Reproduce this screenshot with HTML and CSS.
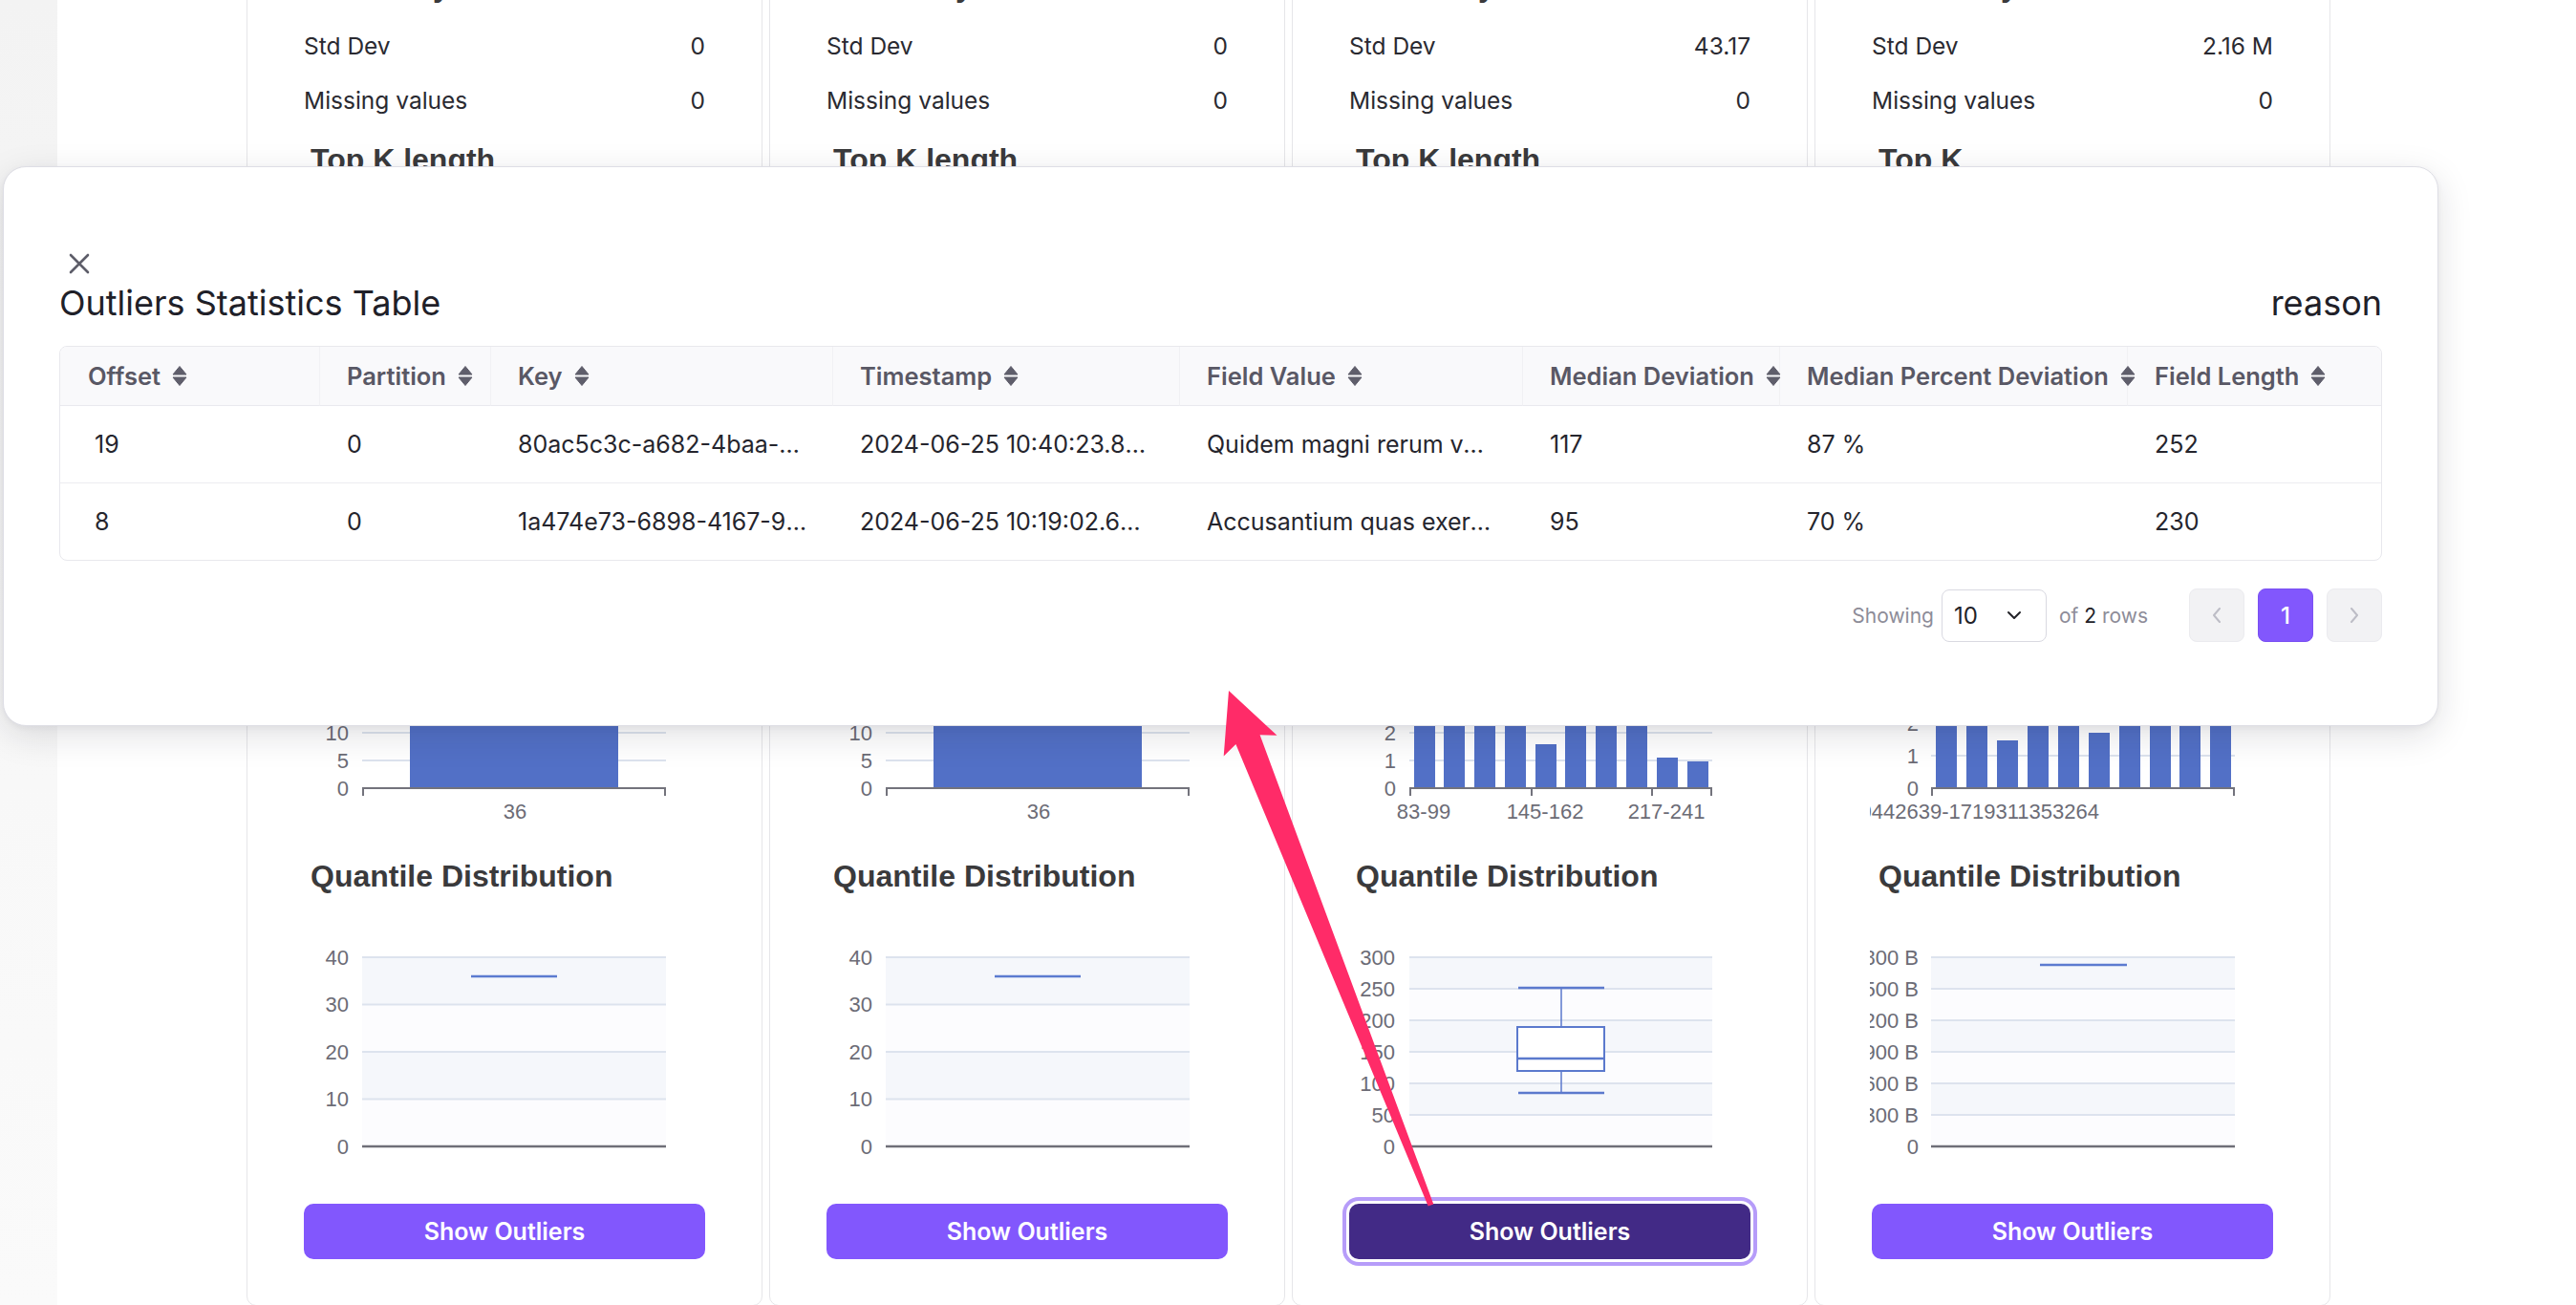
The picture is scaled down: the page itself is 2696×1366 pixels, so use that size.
FILE: index.html
```html
<!DOCTYPE html>
<html lang="en">
<head>
<meta charset="utf-8">
<title>Outliers</title>
<link rel="stylesheet" href="styles.css">
</head>
<body>
<div class="page">
  <aside class="sidebar"></aside>
  <main class="main">
    <div class="cards">
      <!-- Card 1 -->
      <section class="card">
        <h3 class="chart-title">Summary</h3>
        <div class="stats">
          <div class="stat"><span>Std Dev</span><span>0</span></div>
          <div class="stat"><span>Missing values</span><span>0</span></div>
        </div>
        <h3 class="chart-title">Top K length</h3>
        <svg class="chart hist" width="540" height="710" viewBox="0 0 540 710">
          <g class="grid">
            <line x1="121" x2="439" y1="609" y2="609"/><line x1="121" x2="439" y1="580" y2="580"/><line x1="121" x2="439" y1="551" y2="551"/><line x1="121" x2="439" y1="522" y2="522"/><line x1="121" x2="439" y1="493" y2="493"/><line x1="121" x2="439" y1="464" y2="464"/><line x1="121" x2="439" y1="435" y2="435"/><line x1="121" x2="439" y1="406" y2="406"/>
          </g>
          <g class="lbl ylbl">
            <text x="107" y="638">0</text><text x="107" y="609">5</text><text x="107" y="580">10</text><text x="107" y="551">15</text><text x="107" y="522">20</text><text x="107" y="493">25</text><text x="107" y="464">30</text><text x="107" y="435">35</text><text x="107" y="406">40</text>
          </g>
          <rect class="bar" x="171" y="420" width="218" height="218"/>
          <g class="axis"><line x1="121" x2="439" y1="638" y2="638"/><line x1="122" x2="122" y1="638" y2="646"/><line x1="438" x2="438" y1="638" y2="646"/></g>
          <text class="lbl xlbl" x="281" y="662">36</text>
        </svg>
        <h3 class="chart-title">Quantile Distribution</h3>
        <svg class="chart quant" width="540" height="300" viewBox="0 0 540 300">
          <rect class="plot" x="121" y="65" width="318" height="198"/>
          <rect class="band" x="121" y="65" width="318" height="49.5"/>
          <rect class="band" x="121" y="164" width="318" height="49.5"/>
          <g class="grid"><line x1="121" x2="439" y1="65" y2="65"/><line x1="121" x2="439" y1="114.5" y2="114.5"/><line x1="121" x2="439" y1="164" y2="164"/><line x1="121" x2="439" y1="213.5" y2="213.5"/></g>
          <g class="lbl ylbl"><text x="107" y="65">40</text><text x="107" y="114.5">30</text><text x="107" y="164">20</text><text x="107" y="213.5">10</text><text x="107" y="263">0</text></g>
          <line class="baseline" x1="121" x2="439" y1="263" y2="263"/>
          <line class="median" x1="235" x2="325" y1="85" y2="85"/>
        </svg>
        <button class="btn">Show Outliers</button>
      </section>

      <!-- Card 2 -->
      <section class="card">
        <h3 class="chart-title">Summary</h3>
        <div class="stats">
          <div class="stat"><span>Std Dev</span><span>0</span></div>
          <div class="stat"><span>Missing values</span><span>0</span></div>
        </div>
        <h3 class="chart-title">Top K length</h3>
        <svg class="chart hist" width="540" height="710" viewBox="0 0 540 710">
          <g transform="translate(1 0)">
          <g class="grid">
            <line x1="121" x2="439" y1="609" y2="609"/><line x1="121" x2="439" y1="580" y2="580"/><line x1="121" x2="439" y1="551" y2="551"/><line x1="121" x2="439" y1="522" y2="522"/><line x1="121" x2="439" y1="493" y2="493"/><line x1="121" x2="439" y1="464" y2="464"/><line x1="121" x2="439" y1="435" y2="435"/><line x1="121" x2="439" y1="406" y2="406"/>
          </g>
          <g class="lbl ylbl">
            <text x="107" y="638">0</text><text x="107" y="609">5</text><text x="107" y="580">10</text><text x="107" y="551">15</text><text x="107" y="522">20</text><text x="107" y="493">25</text><text x="107" y="464">30</text><text x="107" y="435">35</text><text x="107" y="406">40</text>
          </g>
          <rect class="bar" x="171" y="420" width="218" height="218"/>
          <g class="axis"><line x1="121" x2="439" y1="638" y2="638"/><line x1="122" x2="122" y1="638" y2="646"/><line x1="438" x2="438" y1="638" y2="646"/></g>
          <text class="lbl xlbl" x="281" y="662">36</text>
          </g>
        </svg>
        <h3 class="chart-title">Quantile Distribution</h3>
        <svg class="chart quant" width="540" height="300" viewBox="0 0 540 300">
          <g transform="translate(1 0)">
          <rect class="plot" x="121" y="65" width="318" height="198"/>
          <rect class="band" x="121" y="65" width="318" height="49.5"/>
          <rect class="band" x="121" y="164" width="318" height="49.5"/>
          <g class="grid"><line x1="121" x2="439" y1="65" y2="65"/><line x1="121" x2="439" y1="114.5" y2="114.5"/><line x1="121" x2="439" y1="164" y2="164"/><line x1="121" x2="439" y1="213.5" y2="213.5"/></g>
          <g class="lbl ylbl"><text x="107" y="65">40</text><text x="107" y="114.5">30</text><text x="107" y="164">20</text><text x="107" y="213.5">10</text><text x="107" y="263">0</text></g>
          <line class="baseline" x1="121" x2="439" y1="263" y2="263"/>
          <line class="median" x1="235" x2="325" y1="85" y2="85"/>
          </g>
        </svg>
        <button class="btn">Show Outliers</button>
      </section>

      <!-- Card 3 -->
      <section class="card">
        <h3 class="chart-title">Summary</h3>
        <div class="stats">
          <div class="stat"><span>Std Dev</span><span>43.17</span></div>
          <div class="stat"><span>Missing values</span><span>0</span></div>
        </div>
        <h3 class="chart-title">Top K length</h3>
        <svg class="chart hist" width="540" height="710" viewBox="0 0 540 710">
          <g transform="translate(2 0)">
          <g class="grid">
            <line x1="121" x2="438" y1="609" y2="609"/><line x1="121" x2="438" y1="580" y2="580"/><line x1="121" x2="438" y1="551" y2="551"/><line x1="121" x2="438" y1="522" y2="522"/>
          </g>
          <g class="lbl ylbl">
            <text x="107" y="638">0</text><text x="107" y="609">1</text><text x="107" y="580">2</text><text x="107" y="551">3</text><text x="107" y="522">4</text>
          </g>
          <g class="bar">
            <rect x="126" y="551" width="22" height="87"/><rect x="157" y="551" width="22" height="87"/><rect x="189" y="551" width="22" height="87"/><rect x="221" y="551" width="22" height="87"/><rect x="253" y="592" width="22" height="46"/><rect x="284" y="551" width="22" height="87"/><rect x="316" y="551" width="22" height="87"/><rect x="348" y="551" width="22" height="87"/><rect x="380" y="606" width="22" height="32"/><rect x="412" y="610" width="22" height="28"/>
          </g>
          <g class="axis"><line x1="121" x2="438" y1="638" y2="638"/><line x1="122" x2="122" y1="638" y2="646"/><line x1="249" x2="249" y1="638" y2="646"/><line x1="375" x2="375" y1="638" y2="646"/><line x1="437" x2="437" y1="638" y2="646"/></g>
          <text class="lbl xlbl" x="136" y="662">83-99</text>
          <text class="lbl xlbl" x="263" y="662">145-162</text>
          <text class="lbl xlbl" x="390" y="662">217-241</text>
          </g>
        </svg>
        <h3 class="chart-title">Quantile Distribution</h3>
        <svg class="chart quant" width="540" height="300" viewBox="0 0 540 300">
          <g transform="translate(2 0)">
          <rect class="plot" x="121" y="65" width="317" height="198"/>
          <rect class="band" x="121" y="65" width="317" height="33"/>
          <rect class="band" x="121" y="131" width="317" height="33"/>
          <rect class="band" x="121" y="197" width="317" height="33"/>
          <g class="grid"><line x1="121" x2="438" y1="65" y2="65"/><line x1="121" x2="438" y1="98" y2="98"/><line x1="121" x2="438" y1="131" y2="131"/><line x1="121" x2="438" y1="164" y2="164"/><line x1="121" x2="438" y1="197" y2="197"/><line x1="121" x2="438" y1="230" y2="230"/></g>
          <g class="lbl ylbl"><text x="106" y="65">300</text><text x="106" y="98">250</text><text x="106" y="131">200</text><text x="106" y="164">150</text><text x="106" y="197">100</text><text x="106" y="230">50</text><text x="106" y="263">0</text></g>
          <line class="baseline" x1="121" x2="438" y1="263" y2="263"/>
          <g class="boxplot">
            <line class="whisker" x1="280" x2="280" y1="97" y2="138"/>
            <line class="whisker" x1="280" x2="280" y1="184" y2="207"/>
            <line class="cap" x1="235" x2="325" y1="97" y2="97"/>
            <line class="cap" x1="235" x2="325" y1="207" y2="207"/>
            <rect class="box" x="234" y="138" width="91" height="46"/>
            <line class="cap" x1="234" x2="325" y1="171" y2="171"/>
          </g>
          </g>
        </svg>
        <button class="btn focus">Show Outliers</button>
      </section>

      <!-- Card 4 -->
      <section class="card">
        <h3 class="chart-title">Summary</h3>
        <div class="stats">
          <div class="stat"><span>Std Dev</span><span>2.16 M</span></div>
          <div class="stat"><span>Missing values</span><span>0</span></div>
        </div>
        <h3 class="chart-title">Top K</h3>
        <svg class="chart hist" width="540" height="710" viewBox="0 0 540 710">
          <defs><clipPath id="clip4a"><rect x="55" y="0" width="485" height="710"/></clipPath></defs>
          <g transform="translate(3 0)">
          <g class="grid">
            <line x1="119" x2="437" y1="604" y2="604"/><line x1="119" x2="437" y1="570" y2="570"/><line x1="119" x2="437" y1="536" y2="536"/>
          </g>
          <g class="lbl ylbl">
            <text x="106" y="638">0</text><text x="106" y="604">1</text><text x="106" y="570">2</text><text x="106" y="536">3</text>
          </g>
          <g class="bar">
            <rect x="124" y="536" width="22" height="102"/><rect x="156" y="536" width="22" height="102"/><rect x="188" y="588" width="22" height="50"/><rect x="220" y="536" width="22" height="102"/><rect x="252" y="536" width="22" height="102"/><rect x="284" y="580" width="22" height="58"/><rect x="316" y="536" width="22" height="102"/><rect x="348" y="536" width="22" height="102"/><rect x="379" y="536" width="22" height="102"/><rect x="411" y="536" width="22" height="102"/>
          </g>
          <g class="axis"><line x1="119" x2="437" y1="638" y2="638"/><line x1="120" x2="120" y1="638" y2="646"/><line x1="436" x2="436" y1="638" y2="646"/></g>
          <g clip-path="url(#clip4a)"><text class="lbl xlbl" x="133" y="662">1719310442639-1719311353264</text></g>
          </g>
        </svg>
        <h3 class="chart-title">Quantile Distribution</h3>
        <svg class="chart quant" width="540" height="300" viewBox="0 0 540 300">
          <defs><clipPath id="clip4b"><rect x="55" y="0" width="485" height="300"/></clipPath></defs>
          <g transform="translate(3 0)">
          <rect class="plot" x="119" y="65" width="318" height="198"/>
          <rect class="band" x="119" y="65" width="318" height="33"/>
          <rect class="band" x="119" y="131" width="318" height="33"/>
          <rect class="band" x="119" y="197" width="318" height="33"/>
          <g class="grid"><line x1="119" x2="437" y1="65" y2="65"/><line x1="119" x2="437" y1="98" y2="98"/><line x1="119" x2="437" y1="131" y2="131"/><line x1="119" x2="437" y1="164" y2="164"/><line x1="119" x2="437" y1="197" y2="197"/><line x1="119" x2="437" y1="230" y2="230"/></g>
          <g class="lbl ylbl" clip-path="url(#clip4b)"><text x="106" y="65">1,800 B</text><text x="106" y="98">1,500 B</text><text x="106" y="131">1,200 B</text><text x="106" y="164">900 B</text><text x="106" y="197">600 B</text><text x="106" y="230">300 B</text><text x="106" y="263">0</text></g>
          <line class="baseline" x1="119" x2="437" y1="263" y2="263"/>
          <line class="median" x1="233" x2="324" y1="73" y2="73"/>
          </g>
        </svg>
        <button class="btn">Show Outliers</button>
      </section>
    </div>
  </main>
</div>

<div class="modal">
  <button class="close" aria-label="Close">
    <svg width="22" height="22" viewBox="0 0 22 22"><path d="M2 2 L20 20 M20 2 L2 20"/></svg>
  </button>
  <div class="modal-head">
    <h2 class="modal-title">Outliers Statistics Table</h2>
    <span class="modal-reason">reason</span>
  </div>
  <div class="table-wrap">
    <table class="otable">
      <colgroup>
        <col style="width:272px"><col style="width:179px"><col style="width:358px"><col style="width:363px"><col style="width:359px"><col style="width:269px"><col style="width:364px"><col style="width:265px">
      </colgroup>
      <thead>
        <tr>
          <th><span class="th">Offset<svg class="sort" width="16" height="21" viewBox="0 0 16 21"><path d="M8 0.5 L15 9 H1 Z M1 12 H15 L8 20.5 Z"/></svg></span></th>
          <th><span class="th">Partition<svg class="sort" width="16" height="21" viewBox="0 0 16 21"><path d="M8 0.5 L15 9 H1 Z M1 12 H15 L8 20.5 Z"/></svg></span></th>
          <th><span class="th">Key<svg class="sort" width="16" height="21" viewBox="0 0 16 21"><path d="M8 0.5 L15 9 H1 Z M1 12 H15 L8 20.5 Z"/></svg></span></th>
          <th><span class="th">Timestamp<svg class="sort" width="16" height="21" viewBox="0 0 16 21"><path d="M8 0.5 L15 9 H1 Z M1 12 H15 L8 20.5 Z"/></svg></span></th>
          <th><span class="th">Field Value<svg class="sort" width="16" height="21" viewBox="0 0 16 21"><path d="M8 0.5 L15 9 H1 Z M1 12 H15 L8 20.5 Z"/></svg></span></th>
          <th><span class="th">Median Deviation<svg class="sort" width="16" height="21" viewBox="0 0 16 21"><path d="M8 0.5 L15 9 H1 Z M1 12 H15 L8 20.5 Z"/></svg></span></th>
          <th><span class="th">Median Percent Deviation<svg class="sort" width="16" height="21" viewBox="0 0 16 21"><path d="M8 0.5 L15 9 H1 Z M1 12 H15 L8 20.5 Z"/></svg></span></th>
          <th><span class="th">Field Length<svg class="sort" width="16" height="21" viewBox="0 0 16 21"><path d="M8 0.5 L15 9 H1 Z M1 12 H15 L8 20.5 Z"/></svg></span></th>
        </tr>
      </thead>
      <tbody>
        <tr>
          <td>19</td><td>0</td><td>80ac5c3c-a682-4baa-a7d2-3f1e9b6c5d40</td><td>2024-06-25 10:40:23.812 +00:00</td><td>Quidem magni rerum voluptatem</td><td>117</td><td>87 %</td><td>252</td>
        </tr>
        <tr>
          <td>8</td><td>0</td><td>1a474e73-6898-4167-9b3e-0c2d8f4a1e77</td><td>2024-06-25 10:19:02.645 +00:00</td><td>Accusantium quas exercitationem</td><td>95</td><td>70 %</td><td>230</td>
        </tr>
      </tbody>
    </table>
  </div>
  <div class="pager">
    <span class="pager-label">Showing</span>
    <div class="select"><span>10</span><svg width="16" height="10" viewBox="0 0 16 10"><path d="M2 2 L8 8 L14 2"/></svg></div>
    <span class="pager-label rows">of <b>2</b> rows</span>
    <button class="pg" aria-label="Previous"><svg width="10" height="16" viewBox="0 0 10 16"><path d="M8 1 L2 8 L8 15"/></svg></button>
    <button class="pg active">1</button>
    <button class="pg" aria-label="Next"><svg width="10" height="16" viewBox="0 0 10 16"><path d="M2 1 L8 8 L2 15"/></svg></button>
  </div>
</div>

<svg class="annot-arrow" width="240" height="555" viewBox="1270 715 240 555">
  <polygon points="1286,723 1336.5,769.8 1318.6,769.3 1500.3,1260.4 1494.7,1262.6 1293.4,779.1 1280.7,791.6"/>
</svg>
</body>
</html>
```

FILE: styles.css
```css
* { box-sizing: border-box; }

html, body {
  margin: 0;
  height: 1366px;
  overflow: hidden;
}

body {
  position: relative;
  background: #ffffff;
  color: #25252d;
  font-family: Inter, "Noto Sans", "Liberation Sans", sans-serif;
}

.page {
  display: flex;
  height: 1366px;
}

.sidebar {
  flex: none;
  width: 60px;
  background: linear-gradient(180deg, #f3f3f3 0%, #f8f8f8 60%, #fafafa 100%);
}

.main {
  flex: 1;
  padding-left: 198px;
}

.cards {
  display: grid;
  grid-template-columns: repeat(4, 540px);
  gap: 7px;
  margin-top: -52px;
}

.card {
  background: #fff;
  border: 1px solid #e6e6e9;
  border-radius: 10px;
  padding: 16px 59px 48px;
}

.chart-title {
  margin: 0;
  padding-left: 7px;
  font-family: "Liberation Sans", Arial, sans-serif;
  font-weight: 700;
  font-size: 32px;
  line-height: 40px;
  color: #3a3a3c;
  white-space: nowrap;
}

.stats { margin-top: 15px; }
.stats + .chart-title { margin-top: 13px; }

.stat {
  display: flex;
  justify-content: space-between;
  height: 57px;
  line-height: 57px;
  font-size: 24.5px;
  color: #2a2a31;
}

.chart {
  display: block;
  width: 540px;
  margin: 0 -60px;
  overflow: hidden;
}

.hist { height: 710px; }
.quant { height: 300px; }

.grid line { stroke: #dde3ee; stroke-width: 2; }
.plot { fill: #fcfcfe; }
.band { fill: #f5f7fb; }
.bar, .bar rect { fill: #5270c6; }
.axis line { stroke: #73737c; stroke-width: 2; }
.baseline { stroke: #6f6f78; stroke-width: 2.5; }
.median { stroke: #5c7bd0; stroke-width: 2.5; }
.boxplot .whisker { stroke: #5b79cd; stroke-width: 1.5; }
.boxplot .cap { stroke: #5b79cd; stroke-width: 2.5; }
.boxplot .box { fill: #ffffff; stroke: #5b79cd; stroke-width: 2; }

.lbl, .lbl text {
  font-family: "Liberation Sans", Arial, sans-serif;
  font-size: 22px;
  fill: #6c6c76;
  dominant-baseline: central;
}
.ylbl text { text-anchor: end; }
.xlbl { text-anchor: middle; }

.btn {
  display: block;
  width: 100%;
  height: 58px;
  margin-top: 23px;
  border: 0;
  border-radius: 10px;
  background: #8257fd;
  color: #fff;
  font-family: Inter, "Noto Sans", sans-serif;
  font-weight: 600;
  font-size: 25px;
}

.btn.focus {
  background: #422a86;
  box-shadow: 0 0 0 3px #ffffff, 0 0 0 7px #b69cf9;
}

/* Modal */
.modal {
  position: absolute;
  left: 3px;
  top: 174px;
  width: 2549px;
  height: 586px;
  z-index: 5;
  background: #fff;
  border: 1px solid #dedee5;
  border-radius: 24px;
  box-shadow: 0 10px 36px rgba(20, 20, 40, 0.13), 0 2px 6px rgba(20, 20, 40, 0.05);
  padding: 90px 58px 0;
}

.close {
  display: block;
  width: 22px;
  height: 22px;
  margin-left: 10px;
  padding: 0;
  border: 0;
  background: none;
}
.close svg { display: block; }
.close path { stroke: #5d5d69; stroke-width: 2.6; stroke-linecap: round; fill: none; }

.modal-head {
  display: flex;
  justify-content: space-between;
  align-items: baseline;
  margin-top: 10px;
  font-size: 36px;
  line-height: 41px;
  color: #202028;
}

.modal-title {
  margin: 0;
  font-size: 36px;
  font-weight: 400;
}

.table-wrap {
  margin-top: 24px;
  border: 1px solid #e8e8ed;
  border-radius: 8px;
  overflow: hidden;
}

.otable {
  width: 100%;
  table-layout: fixed;
  border-collapse: separate;
  border-spacing: 0;
}

.otable th,
.otable td {
  box-sizing: content-box;
  padding: 0 28px;
  text-align: left;
  white-space: nowrap;
}

.otable th {
  height: 61px;
  overflow: visible;
  background: #f9f9fb;
  border-bottom: 1px solid #e9e9ee;
  border-right: 1px solid #f1f1f4;
  color: #595865;
  font-weight: 600;
  font-size: 25.5px;
}
.otable th:first-child { padding-left: 29px; }
.otable th:last-child { border-right: 0; }

.th {
  display: inline-flex;
  align-items: center;
  gap: 12px;
}

.sort { flex: none; }
.sort path { fill: #5f5e6b; stroke: #5f5e6b; stroke-width: 1; stroke-linejoin: round; }

.otable td {
  height: 80px;
  overflow: hidden;
  text-overflow: ellipsis;
  border-bottom: 1px solid #ececf0;
  color: #25252d;
  font-size: 25px;
}
.otable td:first-child { padding-left: 36px; }
.otable tbody tr:last-child td { border-bottom: 0; }

.pager {
  display: flex;
  justify-content: flex-end;
  align-items: center;
  height: 56px;
  margin-top: 29px;
}

.pager-label {
  font-size: 21px;
  color: #8d8c98;
}
.pager-label b { font-weight: 400; color: #222228; }
.rows { margin-right: 43px; }

.select {
  display: flex;
  align-items: center;
  justify-content: space-between;
  width: 110px;
  height: 55px;
  margin: 0 13px 0 8px;
  padding: 0 25px 0 12px;
  border: 1.5px solid #d9d9e1;
  border-radius: 8px;
  font-size: 24px;
  color: #222228;
}
.select path { fill: none; stroke: #222228; stroke-width: 2; stroke-linecap: round; stroke-linejoin: round; }

.pg {
  display: flex;
  align-items: center;
  justify-content: center;
  width: 58px;
  height: 56px;
  margin-left: 14px;
  padding: 0;
  border: 1px solid #ebebef;
  border-radius: 8px;
  background: #f2f2f4;
  font-family: Inter, "Noto Sans", sans-serif;
}
.rows + .pg { margin-left: 0; }
.pg path { fill: none; stroke: #bdbdc6; stroke-width: 2; stroke-linecap: round; stroke-linejoin: round; }
.pg.active {
  background: #8257fd;
  border-color: #7a50f2;
  color: #fff;
  font-size: 24px;
  font-weight: 500;
}

/* Annotation arrow drawn on top of the screenshot */
.annot-arrow {
  position: absolute;
  left: 1270px;
  top: 715px;
  z-index: 10;
  pointer-events: none;
}
.annot-arrow polygon { fill: #ff2b68; }
```
